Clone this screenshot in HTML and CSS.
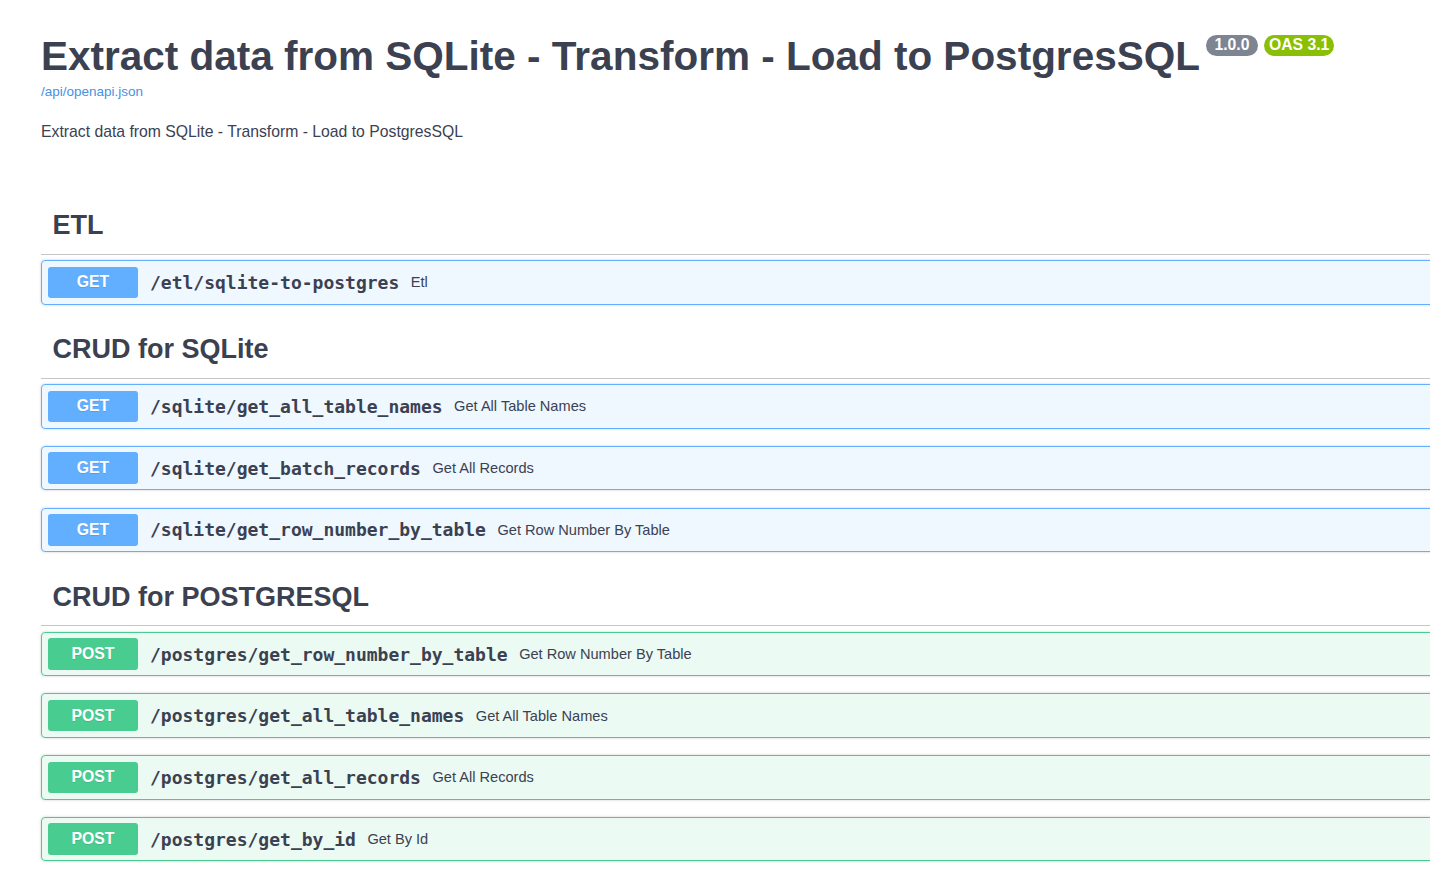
FILE: index.html
```html
<!DOCTYPE html>
<html lang="en">
<head>
<meta charset="utf-8">
<title>Extract data from SQLite - Transform - Load to PostgresSQL</title>
<link rel="stylesheet" href="styles.css">
</head>
<body>
<div class="wrapper">
  <section class="info">
    <div class="title-row">
      <h2 class="title">Extract data from SQLite - Transform - Load to PostgresSQL</h2>
      <span class="badge badge-version">1.0.0</span>
      <span class="badge badge-oas">OAS 3.1</span>
    </div>
    <a class="spec-link" href="#">/api/openapi.json</a>
    <p class="description">Extract data from SQLite - Transform - Load to PostgresSQL</p>
  </section>

  <section class="tag-section">
    <h3 class="tag-header">ETL</h3>
    <div class="opblock opblock-get">
      <span class="method">GET</span>
      <span class="path">/etl/sqlite-to-postgres</span>
      <span class="summary">Etl</span>
    </div>
  </section>

  <section class="tag-section">
    <h3 class="tag-header">CRUD for SQLite</h3>
    <div class="opblock opblock-get">
      <span class="method">GET</span>
      <span class="path">/sqlite/get_all_table_names</span>
      <span class="summary">Get All Table Names</span>
    </div>
    <div class="opblock opblock-get">
      <span class="method">GET</span>
      <span class="path">/sqlite/get_batch_records</span>
      <span class="summary">Get All Records</span>
    </div>
    <div class="opblock opblock-get">
      <span class="method">GET</span>
      <span class="path">/sqlite/get_row_number_by_table</span>
      <span class="summary">Get Row Number By Table</span>
    </div>
  </section>

  <section class="tag-section">
    <h3 class="tag-header">CRUD for POSTGRESQL</h3>
    <div class="opblock opblock-post">
      <span class="method">POST</span>
      <span class="path">/postgres/get_row_number_by_table</span>
      <span class="summary">Get Row Number By Table</span>
    </div>
    <div class="opblock opblock-post">
      <span class="method">POST</span>
      <span class="path">/postgres/get_all_table_names</span>
      <span class="summary">Get All Table Names</span>
    </div>
    <div class="opblock opblock-post">
      <span class="method">POST</span>
      <span class="path">/postgres/get_all_records</span>
      <span class="summary">Get All Records</span>
    </div>
    <div class="opblock opblock-post">
      <span class="method">POST</span>
      <span class="path">/postgres/get_by_id</span>
      <span class="summary">Get By Id</span>
    </div>
  </section>
</div>
</body>
</html>
```

FILE: styles.css
```css
html, body {
  margin: 0;
  padding: 0;
  overflow: hidden;
  background: #fff;
}

body {
  font-family: "Liberation Sans", Arial, sans-serif;
  color: #3b4151;
}

.wrapper {
  width: 1500px;
  padding: 33px 0 0 41px;
  box-sizing: border-box;
}

/* ---------- info ---------- */
.title-row {
  display: flex;
  align-items: flex-start;
}

.title {
  margin: 0;
  font-size: 40.5px;
  font-weight: 700;
  line-height: 46.5px;
  color: #3b4151;
}

.badge {
  display: inline-block;
  margin-top: 2px;
  height: 21px;
  line-height: 20px;
  border-radius: 57px;
  font-size: 15.75px;
  font-weight: 700;
  color: #fff;
}

.badge-version {
  margin-left: 6px;
  padding: 0 8.5px;
  background: #7d8492;
}

.badge-oas {
  margin-left: 6px;
  padding: 0 5px;
  background: #89bf04;
}

.spec-link {
  display: block;
  margin-top: 4px;
  font-size: 13.5px;
  line-height: 16px;
  color: #4990e2;
  text-decoration: none;
}

.description {
  margin: 21px 0 0;
  font-size: 15.75px;
  line-height: 22px;
  color: #3b4151;
}

/* ---------- tags ---------- */
.tag-section {
  display: flex;
  flex-direction: column;
}

.info + .tag-section {
  margin-top: 55px;
}

.tag-header {
  margin: 0 0 5.5px;
  padding: 11.25px 20px 11.25px 11.5px;
  font-size: 27px;
  line-height: 33.5px;
  font-weight: 700;
  color: #3b4151;
  border-bottom: 1px solid rgba(59, 65, 81, 0.3);
}

/* ---------- operations ---------- */
.opblock {
  display: flex;
  align-items: center;
  margin: 0 0 17.2px;
  padding: 5.5px 6px;
  border: 1px solid;
  border-radius: 4px;
  box-shadow: 0 0 3px rgba(0, 0, 0, 0.19);
}

.opblock-get {
  border-color: #61affe;
  background: rgba(97, 175, 254, 0.1);
}

.opblock-post {
  border-color: #49cc90;
  background: rgba(73, 204, 144, 0.1);
}

.method {
  flex: none;
  width: 90px;
  padding: 6.75px 0;
  border-radius: 3px;
  font-size: 15.75px;
  line-height: 18px;
  font-weight: 700;
  text-align: center;
  color: #fff;
  text-shadow: 0 1px 0 rgba(0, 0, 0, 0.1);
}

.opblock-get .method {
  background: #61affe;
}

.opblock-post .method {
  background: #49cc90;
}

.path {
  padding: 0 11.5px 0 12px;
  font-family: "DejaVu Sans Mono", "Liberation Mono", monospace;
  font-size: 18px;
  font-weight: 700;
  color: #3b4151;
}

.summary {
  font-size: 14.6px;
  color: #3b4151;
}
```
